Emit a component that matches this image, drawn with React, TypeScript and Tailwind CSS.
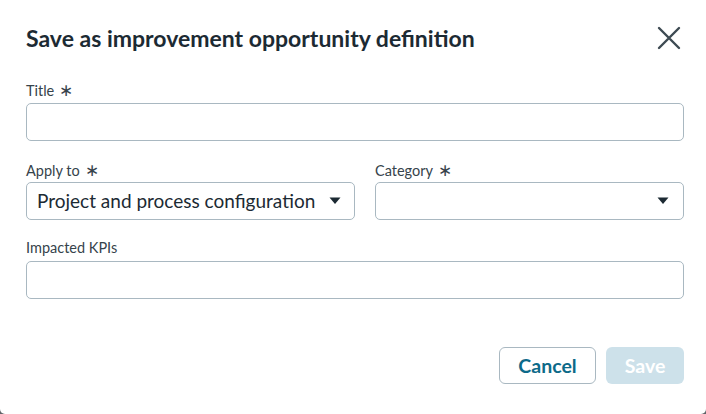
import React from 'react';

const Star = () => <span className="ml-[5px] text-[17px] font-normal">∗</span>;

const Caret = () => (
  <svg width="12" height="8" viewBox="0 0 12 8" className="shrink-0">
    <path d="M0.5 0.5 L11.5 0.5 L6 7 Z" fill="#1c2a33" />
  </svg>
);

const App: React.FC = () => {
  return (
    <div className="w-[706px] h-[414px] bg-[#5f6468]" style={{ fontFamily: 'Lato, "Open Sans", sans-serif' }}>
      <div className="w-[706px] h-[414px] bg-white rounded-b-[5px] pl-[26px] pr-[22px] pt-[22px] text-[#1c2a33]">
        {/* header */}
        <div className="flex items-center justify-between h-[32px]">
          <h1 className="text-[23px] font-bold">Save as improvement opportunity definition</h1>
          <button className="w-[24px] h-[24px] mr-[3px] flex items-center justify-center">
            <svg width="24" height="24" viewBox="0 0 24 24">
              <path d="M2 2 L22 22 M22 2 L2 22" stroke="#3d4a52" strokeWidth="2.4" strokeLinecap="round" />
            </svg>
          </button>
        </div>

        {/* title */}
        <label className="block mt-[26px] h-[20px] leading-[20px] text-[14.5px] text-[#36434b]">Title<Star /></label>
        <div className="mt-[3px] h-[38px] rounded-[5px] border border-[#a9b8c1]" />

        {/* apply to / category */}
        <div className="mt-[19px] flex gap-[20px]">
          <div className="w-[329px]">
            <label className="block h-[20px] leading-[20px] text-[14.5px] text-[#36434b]">Apply to<Star /></label>
            <div className="mt-[2px] h-[38px] rounded-[5px] border border-[#a9b8c1] flex items-center justify-between pl-[10px] pr-[13px]">
              <span className="text-[19px] whitespace-nowrap text-[#1c2a33]">Project and process configuration</span>
              <Caret />
            </div>
          </div>
          <div className="flex-1">
            <label className="block h-[20px] leading-[20px] text-[14.5px] text-[#36434b]">Category<Star /></label>
            <div className="mt-[2px] h-[38px] rounded-[5px] border border-[#a9b8c1] flex items-center justify-end pr-[14px]">
              <Caret />
            </div>
          </div>
        </div>

        {/* KPIs */}
        <label className="block mt-[18px] h-[20px] leading-[20px] text-[14.5px] text-[#36434b]">Impacted KPIs</label>
        <div className="mt-[3px] h-[38px] rounded-[5px] border border-[#a9b8c1]" />

        {/* footer */}
        <div className="mt-[48px] flex justify-end gap-[10px]">
          <button className="w-[97px] h-[37px] rounded-[6px] border border-[#a9b8c1] text-[19.5px] font-bold text-[#0d6a89]">Cancel</button>
          <button className="w-[78px] h-[37px] rounded-[6px] bg-[#cde1ea] text-[19.5px] font-bold text-white">Save</button>
        </div>
      </div>
    </div>
  );
};

export default App;
